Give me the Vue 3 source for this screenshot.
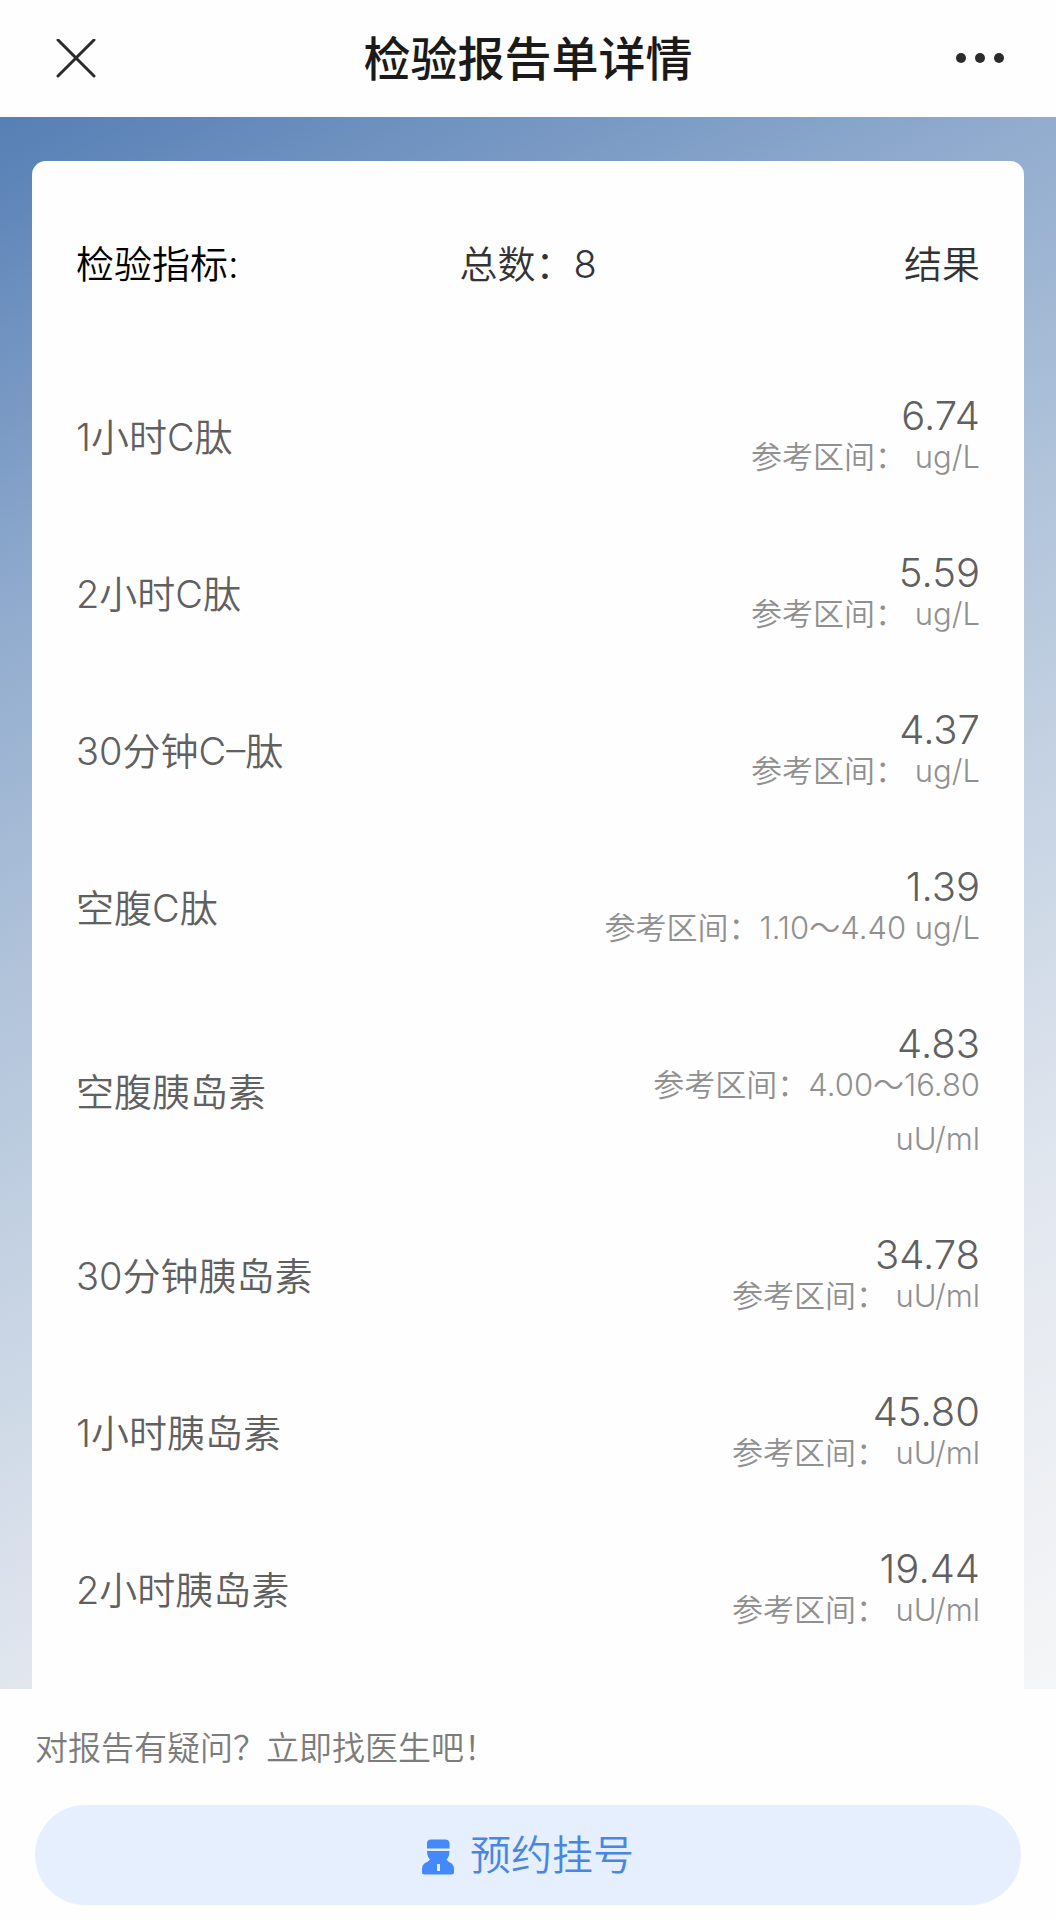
<script setup>
const title = '检验报告单详情'

const items = [
  { name: '1小时C肽', value: '6.74', range: '', unit: 'ug/L' },
  { name: '2小时C肽', value: '5.59', range: '', unit: 'ug/L' },
  { name: '30分钟C–肽', value: '4.37', range: '', unit: 'ug/L' },
  { name: '空腹C肽', value: '1.39', range: '1.10～4.40', unit: 'ug/L' },
  { name: '空腹胰岛素', value: '4.83', range: '4.00～16.80', unit: 'uU/ml' },
  { name: '30分钟胰岛素', value: '34.78', range: '', unit: 'uU/ml' },
  { name: '1小时胰岛素', value: '45.80', range: '', unit: 'uU/ml' },
  { name: '2小时胰岛素', value: '19.44', range: '', unit: 'uU/ml' },
]
</script>

<template>
  <div class="page">
    <header class="navbar">
      <button class="nav-btn" type="button" aria-label="关闭">
        <svg width="40" height="40" viewBox="0 0 40 40" fill="none" stroke="#2b2b2b" stroke-width="3" stroke-linecap="round">
          <path d="M2 1 38 37M38 1 2 37" />
        </svg>
      </button>
      <h1 class="title">{{ title }}</h1>
      <button class="nav-btn" type="button" aria-label="更多">
        <svg width="48" height="12" viewBox="0 0 48 12" fill="#2b2b2b">
          <circle cx="5" cy="5" r="5" />
          <circle cx="24" cy="5" r="5" />
          <circle cx="43" cy="5" r="5" />
        </svg>
      </button>
    </header>

    <main class="backdrop">
      <section class="card">
        <table class="report">
          <thead>
            <tr>
              <th class="col-name" scope="col">检验指标:</th>
              <th class="col-total" scope="col">总数：{{ items.length }}</th>
              <th class="col-result" scope="col">结果</th>
            </tr>
          </thead>
          <tbody>
            <tr v-for="item in items" :key="item.name">
              <td class="name">{{ item.name }}</td>
              <td class="result" colspan="2">
                <div class="value">{{ item.value }}</div>
                <div class="range">参考区间：{{ item.range }} {{ item.unit }}</div>
              </td>
            </tr>
          </tbody>
        </table>
      </section>
    </main>

    <footer class="footer">
      <p class="hint">对报告有疑问？立即找医生吧！</p>
      <button class="book" type="button">
        <svg width="32" height="40" viewBox="0 -4 32 40" aria-hidden="true">
          <path fill="#4489fb" d="M5 9.500V4.500Q5 .5 9 .5H23Q27.500 .5 27.500 4.500V9.500Z" />
          <path fill="#4489fb" d="M5 12H27.500C27.500 16 26.500 18.500 24.500 20.500Q25.500 22.500 29 24Q32 26 32 30V33Q32 35.500 29.500 35.500H2.500Q0 35.500 0 33V30Q0 26 3 24Q6.500 22.500 8 20.500C6 18.500 5 16 5 12Z" />
          <path fill="#e6effe" d="M15 25H18V32H15Z" />
        </svg>
        <span class="book-label">预约挂号</span>
      </button>
    </footer>
  </div>
</template>

<style>
body {
  margin: 0;
  background: #fff;
}
</style>

<style scoped>
.page {
  display: flex;
  flex-direction: column;
  min-height: 100vh;
  background: #fefefe;
  font-family: Inter, "Noto Sans CJK SC", sans-serif;
  font-weight: 350;
  color: #333;
}

button {
  border: 0;
  padding: 0;
  background: none;
  font: inherit;
  cursor: pointer;
}

.navbar {
  display: flex;
  align-items: center;
  justify-content: space-between;
  height: 117px;
  padding: 0 44px;
}

.nav-btn {
  display: flex;
  align-items: center;
  justify-content: center;
  width: 64px;
  height: 64px;
}

.title {
  margin: 0;
  font-size: 47px;
  line-height: 64px;
  font-weight: 500;
  color: #1a1a1a;
}

.backdrop {
  display: flex;
  flex: 1;
  padding: 44px 32px 0;
  background: linear-gradient(154deg, #567fb5 0%, #93adcf 25%, #b1c4da 42%, #e2e7ef 76%, #f5f6f7 100%);
}

.card {
  flex: 1;
  padding: 0 44px;
  border-radius: 14px 14px 0 0;
  background: #fefefe;
}

.report {
  width: 100%;
  border-collapse: collapse;
  table-layout: fixed;
}

th {
  height: 202px;
  padding: 2px 0 0;
  font-size: 38px;
  line-height: 54px;
  font-weight: 350;
}

.col-name {
  width: 38%;
  text-align: left;
  color: #000;
}

.col-total {
  width: 24%;
}

.col-result {
  text-align: right;
}

.name {
  padding: 37px 0 50px;
  font-size: 38px;
  line-height: 54px;
  color: #606060;
}

.result {
  padding: 37px 0 38px;
  text-align: right;
}

.value {
  font-size: 40px;
  line-height: 28px;
  color: #606060;
}

.range {
  max-width: 400px;
  margin-left: auto;
  font-size: 31px;
  line-height: 54px;
  color: #909090;
}

.footer {
  padding: 32px 35px 15px;
}

.hint {
  margin: 0 0 30px;
  font-size: 33px;
  line-height: 54px;
  color: #7c7c7c;
}

.book {
  display: flex;
  align-items: center;
  justify-content: center;
  gap: 16px;
  width: 100%;
  height: 100px;
  border-radius: 50px;
  background: #e6effe;
  font-size: 41px;
  color: #4a86e0;
}

.book-label {
  line-height: 54px;
}
</style>
